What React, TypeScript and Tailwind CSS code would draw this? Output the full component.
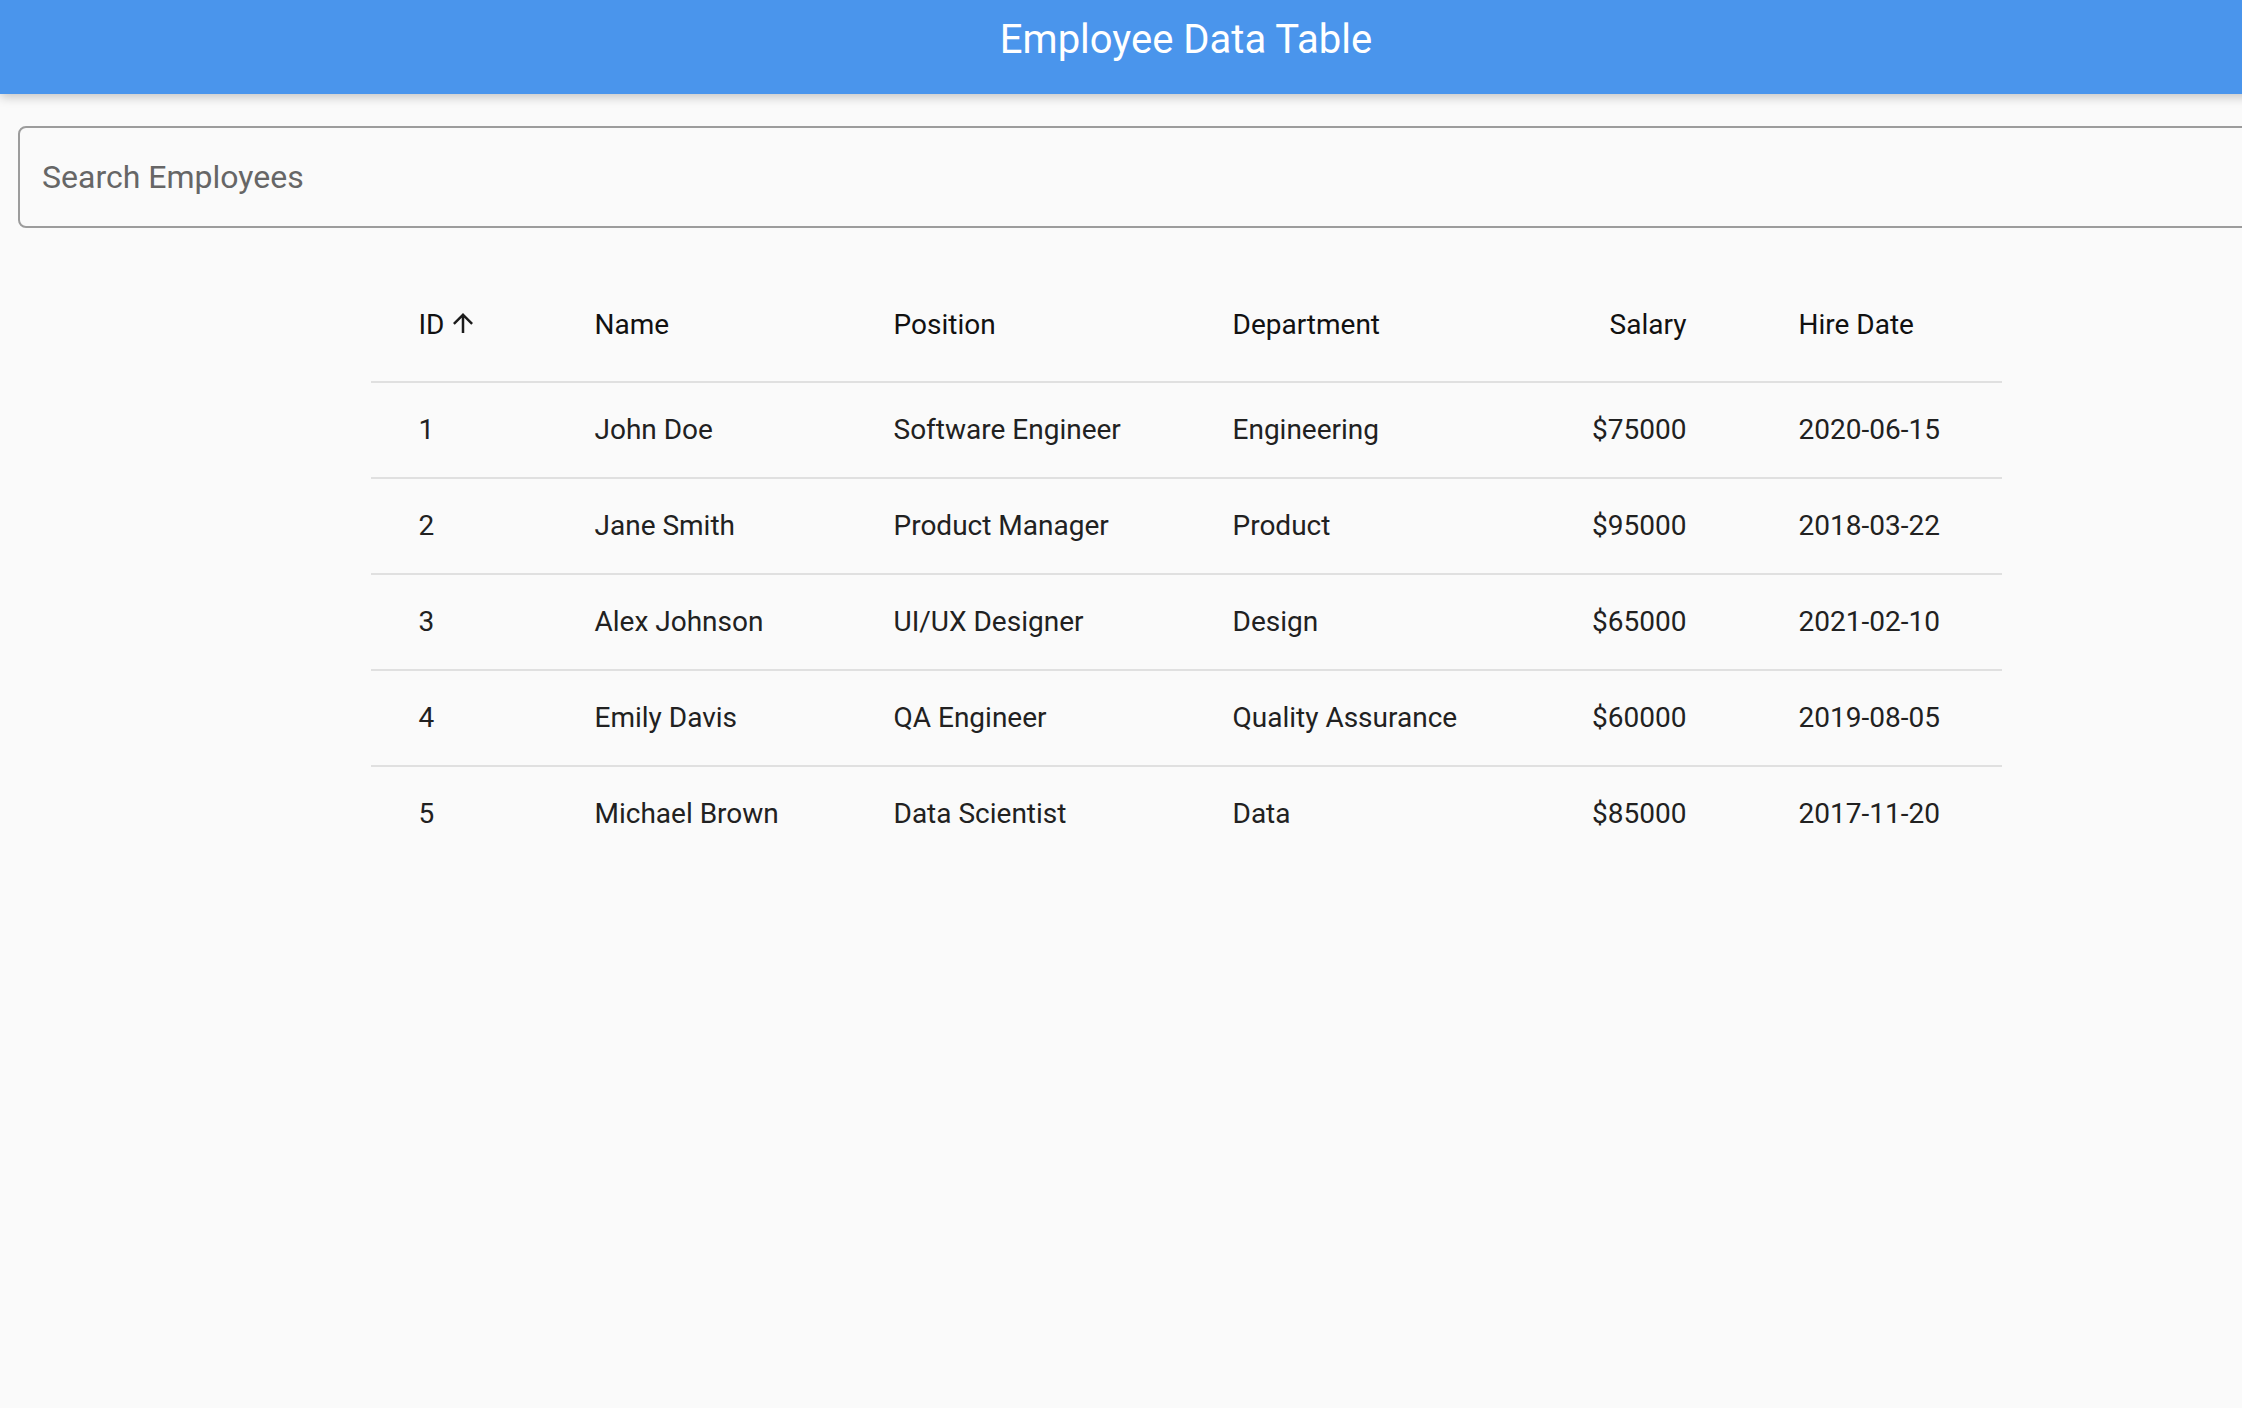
import { useState } from 'react';

interface Employee {
  readonly id: number;
  readonly name: string;
  readonly position: string;
  readonly department: string;
  readonly salary: number;
  readonly hireDate: string;
}

const employees: Employee[] = [
  { id: 1, name: 'John Doe', position: 'Software Engineer', department: 'Engineering', salary: 75000, hireDate: '2020-06-15' },
  { id: 2, name: 'Jane Smith', position: 'Product Manager', department: 'Product', salary: 95000, hireDate: '2018-03-22' },
  { id: 3, name: 'Alex Johnson', position: 'UI/UX Designer', department: 'Design', salary: 65000, hireDate: '2021-02-10' },
  { id: 4, name: 'Emily Davis', position: 'QA Engineer', department: 'Quality Assurance', salary: 60000, hireDate: '2019-08-05' },
  { id: 5, name: 'Michael Brown', position: 'Data Scientist', department: 'Data', salary: 85000, hireDate: '2017-11-20' },
];

const cols = 'grid grid-cols-[64px_187px_227px_224px_118px_155px] gap-x-[112px] px-[48px]';

function SortArrow() {
  return (
    <svg viewBox="0 0 24 24" className="ml-[3px] mb-[4px] h-[30px] w-[30px] fill-[#1b1b1b]" aria-hidden="true">
      <path d="M4 12l1.41 1.41L11 7.83V20h2V7.83l5.58 5.59L20 12l-8-8-8 8z" />
    </svg>
  );
}

export default function App() {
  const [query, setQuery] = useState('');

  const rows = employees.filter((e) =>
    e.name.toLowerCase().includes(query.toLowerCase()),
  );

  return (
    <div className="w-[2242px] h-[1408px] overflow-hidden bg-[#fafafa] font-['Roboto',sans-serif]">
      <div className="w-[2372px]">
        <header className="relative z-10 flex h-[94px] justify-center bg-[#4a95ec] pt-[20px] shadow-[0_3px_10px_rgba(0,0,0,0.22)]">
          <h1 className="text-[40px] leading-[40px] font-normal text-white">Employee Data Table</h1>
        </header>

        <div className="px-[18px] pt-[32px]">
          <input
            value={query}
            onChange={(e) => setQuery(e.target.value)}
            placeholder="Search Employees"
            className="h-[102px] w-full rounded-[8px] border-2 border-[#9c9c9c] bg-transparent pl-[22px] text-[32px] text-[#212121] outline-none placeholder:text-[#666666]"
          />
        </div>

        <div className="mx-auto mt-[41px] w-[1631px] text-[28px]">
          <div className={`${cols} h-[112px] items-center font-normal text-[#111111]`}>
            <div className="flex items-center">
              <span>ID</span>
              <SortArrow />
            </div>
            <div>Name</div>
            <div>Position</div>
            <div>Department</div>
            <div className="text-right">Salary</div>
            <div>Hire Date</div>
          </div>
          {rows.map((e) => (
            <div
              key={e.id}
              className={`${cols} h-[96px] items-center border-t-2 border-[#e0e0e0] text-[#212121]`}
            >
              <div>{e.id}</div>
              <div className="whitespace-nowrap">{e.name}</div>
              <div className="whitespace-nowrap">{e.position}</div>
              <div className="whitespace-nowrap">{e.department}</div>
              <div className="text-right">${e.salary}</div>
              <div>{e.hireDate}</div>
            </div>
          ))}
        </div>
      </div>
    </div>
  );
}
